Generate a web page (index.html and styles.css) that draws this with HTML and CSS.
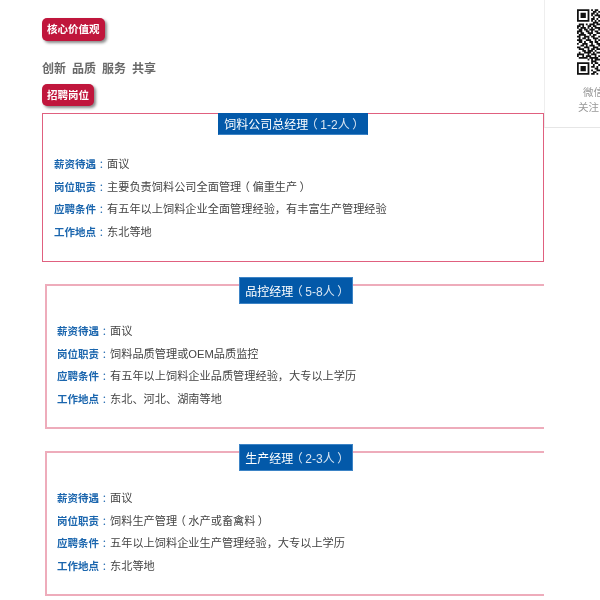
FILE: index.html
```html
<!DOCTYPE html>
<html lang="zh-CN">
<head>
<meta charset="utf-8">
<title>招聘岗位</title>
<link rel="stylesheet" href="styles.css">
</head>
<body>
<div class="page">
  <main class="main">
    <div class="badge">核心价值观</div>
    <div class="values"><span>创新</span><span>品质</span><span>服务</span><span>共享</span></div>
    <div class="badge badge-second">招聘岗位</div>

    <section class="job job-first">
      <h2 class="job-title">饲料公司总经理<span class="count"><span class="mark">（</span>1-2人<span class="mark">）</span></span></h2>
      <div class="job-rows">
        <p class="row"><b class="label">薪资待遇<span class="mark">：</span></b><span>面议</span></p>
        <p class="row"><b class="label">岗位职责<span class="mark">：</span></b><span>主要负责饲料公司全面管理<span class="mark">（</span>偏重生产<span class="mark">）</span></span></p>
        <p class="row"><b class="label">应聘条件<span class="mark">：</span></b><span>有五年以上饲料企业全面管理经验，有丰富生产管理经验</span></p>
        <p class="row"><b class="label">工作地点<span class="mark">：</span></b><span>东北等地</span></p>
      </div>
    </section>

    <section class="job job-plain">
      <h2 class="job-title">品控经理<span class="count"><span class="mark">（</span>5-8人<span class="mark">）</span></span></h2>
      <div class="job-rows">
        <p class="row"><b class="label">薪资待遇<span class="mark">：</span></b><span>面议</span></p>
        <p class="row"><b class="label">岗位职责<span class="mark">：</span></b><span>饲料品质管理或OEM品质监控</span></p>
        <p class="row"><b class="label">应聘条件<span class="mark">：</span></b><span>有五年以上饲料企业品质管理经验，大专以上学历</span></p>
        <p class="row"><b class="label">工作地点<span class="mark">：</span></b><span>东北、河北、湖南等地</span></p>
      </div>
    </section>

    <section class="job job-plain">
      <h2 class="job-title">生产经理<span class="count"><span class="mark">（</span>2-3人<span class="mark">）</span></span></h2>
      <div class="job-rows">
        <p class="row"><b class="label">薪资待遇<span class="mark">：</span></b><span>面议</span></p>
        <p class="row"><b class="label">岗位职责<span class="mark">：</span></b><span>饲料生产管理<span class="mark">（</span>水产或畜禽料<span class="mark">）</span></span></p>
        <p class="row"><b class="label">应聘条件<span class="mark">：</span></b><span>五年以上饲料企业生产管理经验，大专以上学历</span></p>
        <p class="row"><b class="label">工作地点<span class="mark">：</span></b><span>东北等地</span></p>
      </div>
    </section>
  </main>

  <aside class="side">
    <svg class="qr" viewBox="0 0 13 37" width="23" height="66" aria-hidden="true">
      <path fill="none" stroke="#111" stroke-width="1" d="
        M0 .5h7M8 .5h1M10 .5h2
        M0 1.5h1M6 1.5h1M9 1.5h2M12 1.5h1
        M0 2.5h1M2 2.5h3M6 2.5h1M8 2.5h2M11 2.5h1
        M0 3.5h1M2 3.5h3M6 3.5h1M8 3.5h1M10 3.5h3
        M0 4.5h1M2 4.5h3M6 4.5h1M9 4.5h1M12 4.5h1
        M0 5.5h1M6 5.5h1M8 5.5h2M11 5.5h1
        M0 6.5h7M8 6.5h1M10 6.5h1M12 6.5h1
        M9 7.5h3
        M1 8.5h3M5 8.5h1M7 8.5h3M11 8.5h2
        M0 9.5h2M3 9.5h1M6 9.5h2M9 9.5h2
        M0 10.5h1M2 10.5h3M6 10.5h1M8 10.5h1M10 10.5h3
        M1 11.5h2M4 11.5h2M7 11.5h3M12 11.5h1
        M0 12.5h3M5 12.5h2M8 12.5h1M10 12.5h2
        M0 13.5h1M2 13.5h2M6 13.5h3M11 13.5h2
        M1 14.5h4M7 14.5h1M9 14.5h2
        M0 15.5h2M4 15.5h3M8 15.5h2M12 15.5h1
        M1 16.5h1M3 16.5h2M6 16.5h1M9 16.5h3
        M0 17.5h3M5 17.5h3M10 17.5h1M12 17.5h1
        M1 18.5h2M4 18.5h1M7 18.5h2M10 18.5h2
        M0 19.5h1M3 19.5h3M8 19.5h1M11 19.5h2
        M2 20.5h2M5 20.5h1M7 20.5h3M12 20.5h1
        M0 21.5h2M4 21.5h3M9 21.5h3
        M1 22.5h3M6 22.5h1M8 22.5h2M11 22.5h2
        M3 23.5h2M6 23.5h3M10 23.5h1
        M1 24.5h1M4 24.5h4M9 24.5h1M11 24.5h2
        M0 25.5h4M6 25.5h1M8 25.5h3
        M0 26.5h1M3 26.5h1M5 26.5h3M10 26.5h1M12 26.5h1
        M1 27.5h5M7 27.5h2M9 27.5h3
        M6 28.5h1M8 28.5h1M10 28.5h3
        M8 29.5h3
        M0 30.5h7M8 30.5h1M10 30.5h2
        M0 31.5h1M6 31.5h1M9 31.5h1M12 31.5h1
        M0 32.5h1M2 32.5h3M6 32.5h1M8 32.5h2M11 32.5h1
        M0 33.5h1M2 33.5h3M6 33.5h1M10 33.5h2
        M0 34.5h1M2 34.5h3M6 34.5h1M8 34.5h1M11 34.5h2
        M0 35.5h1M6 35.5h1M9 35.5h2
        M0 36.5h7M8 36.5h2M11 36.5h1"/>
    </svg>
    <p class="side-text side-text-first">微信</p>
    <p class="side-text side-text-second">关注</p>
  </aside>
</div>
</body>
</html>
```

FILE: styles.css
```css
* {
  box-sizing: border-box;
}

html,
body {
  margin: 0;
  height: 600px;
  overflow: hidden;
  background: #fff;
}

body {
  font-family: "Liberation Sans", "Noto Sans CJK SC", sans-serif;
  color: #444;
}

.page {
  display: flex;
  align-items: flex-start;
  width: 600px;
  height: 600px;
  overflow: hidden;
  filter: blur(0.4px);
}

.main {
  flex: 0 0 544px;
  height: 600px;
  padding: 18px 0 0 42px;
  overflow: hidden;
}

.badge {
  width: fit-content;
  height: 23px;
  padding: 0 5px;
  border-radius: 5px;
  background: #c0163c;
  box-shadow: 2px 2px 3px #8a8a8a;
  color: #fff;
  font-size: 10.5px;
  font-weight: 700;
  line-height: 23px;
}

.badge-second {
  height: 22px;
  line-height: 22px;
}

.values {
  display: flex;
  gap: 6px;
  height: 20px;
  margin: 17px 0 6px;
  color: #696969;
  font-size: 12px;
  font-weight: 700;
  line-height: 22px;
}

.job {
  display: flex;
  flex-direction: column;
  align-items: center;
  width: 502px;
  height: 149px;
  margin: 7px 0 0;
  border: 1px solid #e0607f;
}

.job-plain {
  height: 145px;
  margin: 22px 0 0 3px;
  border: 2px solid #eeacbb;
}

.job-title {
  height: 22px;
  margin: -1px 0 18px;
  padding: 0 5px;
  border: 1px solid #0359a9;
  border-bottom-color: #3d84c6;
  background: #0359a9;
  color: #fff;
  font-size: 12px;
  font-weight: 400;
  line-height: 22px;
  white-space: nowrap;
}

.job-plain .job-title {
  height: 27px;
  margin: -9px 0 16px;
  border-color: #3d84c6;
  line-height: 28px;
}

.count {
  color: #dbe7f3;
}

.mark {
  display: inline-block;
  width: 1em;
  font-feature-settings: "palt";
  font-weight: 400;
  text-align: center;
}

.job-rows {
  align-self: stretch;
  padding-left: 11px;
}

.job-plain .job-rows {
  padding-left: 10px;
}

.row {
  display: flex;
  align-items: baseline;
  height: 22.5px;
  margin: 0;
  color: #444;
  font-size: 11.2px;
  line-height: 22.5px;
  white-space: nowrap;
}

.label {
  flex: 0 0 53px;
  color: #1b66ae;
  font-size: 10.5px;
  font-weight: 700;
}

.side {
  flex: 0 0 56px;
  height: 128px;
  padding: 9px 0 0 32px;
  overflow: hidden;
  border-left: 1px solid #eee;
  border-bottom: 1px solid #e6e6e6;
}

.qr {
  display: block;
}

.side-text {
  margin: 0;
  color: #999;
  font-size: 10.5px;
  line-height: 15px;
  white-space: nowrap;
}

.side-text-first {
  margin: 10px 0 0 6px;
}

.side-text-second {
  margin-left: 1px;
}
```
